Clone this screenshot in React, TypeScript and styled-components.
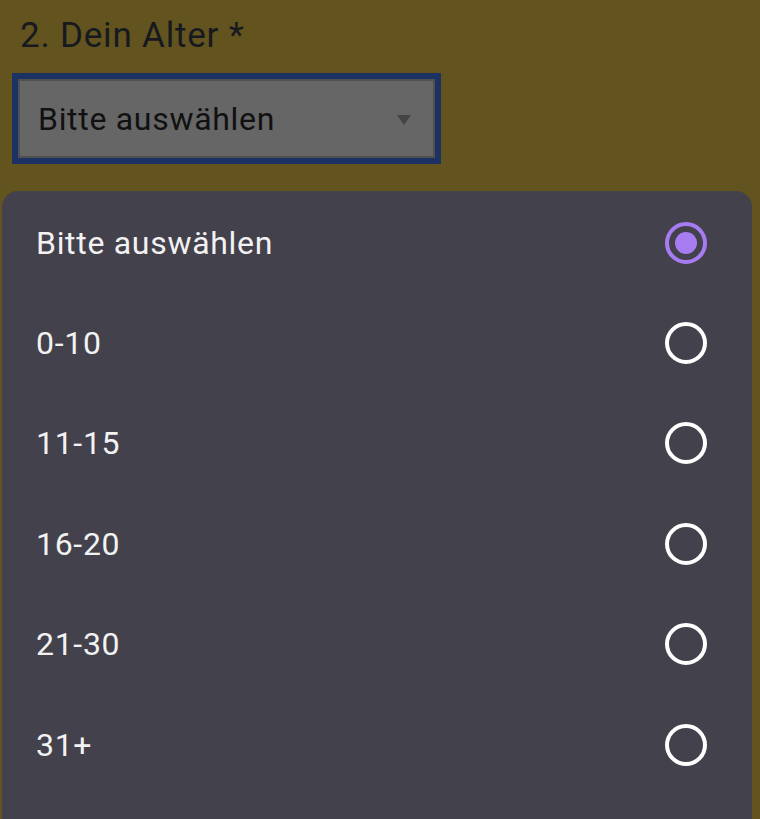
import React, { useState } from "react";
import styled, { createGlobalStyle } from "styled-components";

const Global = createGlobalStyle`
  html, body {
    margin: 0;
    padding: 0;
    background: #63531f;
    font-family: Roboto, "Noto Sans", "Liberation Sans", sans-serif;
    overflow: hidden;
  }
`;

const Page = styled.div`
  width: 760px;
  height: 819px;
  display: flex;
  flex-direction: column;
  overflow: hidden;
`;

const Label = styled.div`
  margin: 16px 0 0 20px;
  font-size: 35px;
  line-height: 40px;
  letter-spacing: 0.8px;
  color: #161a1f;
`;

const SelectOuter = styled.div`
  margin: 17px 0 0 12px;
  width: 429px;
  height: 91px;
  box-sizing: border-box;
  border: 6px solid #1b3262;
  display: flex;
`;

const SelectInner = styled.div`
  flex: 1;
  box-sizing: border-box;
  border: 2px solid #505050;
  background: #666666;
  display: flex;
  align-items: center;
  justify-content: space-between;
  padding: 0 22px 0 18px;
  font-size: 32px;
  letter-spacing: 0.7px;
  color: #111111;
`;

const Arrow = styled.div`
  width: 0;
  height: 0;
  border-left: 7px solid transparent;
  border-right: 7px solid transparent;
  border-top: 10px solid #444444;
  margin-top: 2px;
`;

const Panel = styled.div`
  margin: 27px 0 0 2px;
  padding-top: 1.5px;
  width: 750px;
  flex: 1;
  background: #43414c;
  border-radius: 16px 16px 0 0;
  display: flex;
  flex-direction: column;
`;

const Row = styled.div`
  height: 100.4px;
  flex-shrink: 0;
  display: flex;
  align-items: center;
  justify-content: space-between;
  padding: 0 45px 0 34px;
  font-size: 32px;
  letter-spacing: 0.7px;
  color: #f2f2f2;
  cursor: pointer;
`;

const Radio = styled.div<{ $on: boolean }>`
  width: 42px;
  height: 42px;
  box-sizing: border-box;
  border-radius: 50%;
  border: 4px solid ${(p) => (p.$on ? "#a77cf3" : "#ffffff")};
  display: flex;
  align-items: center;
  justify-content: center;
`;

const Dot = styled.div`
  width: 22px;
  height: 22px;
  border-radius: 50%;
  background: #a77cf3;
`;

const options = ["Bitte auswählen", "0-10", "11-15", "16-20", "21-30", "31+"];

export default function App() {
  const [sel, setSel] = useState(0);
  return (
    <Page>
      <Global />
      <Label>2. Dein Alter *</Label>
      <SelectOuter>
        <SelectInner>
          <span>{options[sel]}</span>
          <Arrow />
        </SelectInner>
      </SelectOuter>
      <Panel>
        {options.map((o, i) => (
          <Row key={o} onClick={() => setSel(i)}>
            <span>{o}</span>
            <Radio $on={i === sel}>{i === sel && <Dot />}</Radio>
          </Row>
        ))}
      </Panel>
    </Page>
  );
}
